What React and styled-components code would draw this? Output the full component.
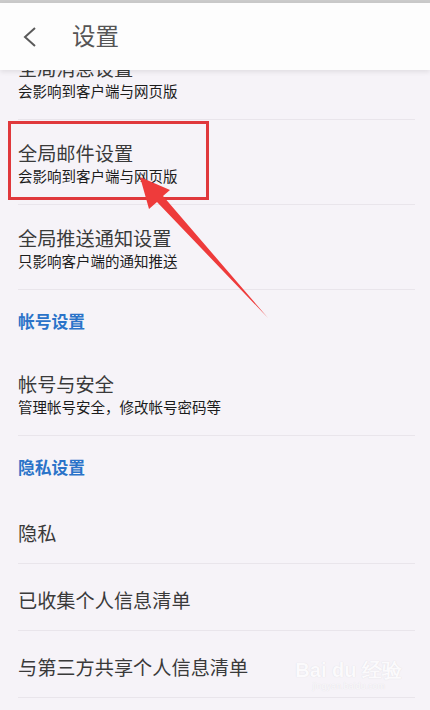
import React from 'react'
import styled, { createGlobalStyle } from 'styled-components'

const GlobalStyle = createGlobalStyle`
  html, body {
    margin: 0;
    padding: 0;
    background: #f6f3f8;
  }
  body {
    font-family: "Noto Sans CJK SC", "Noto Sans", sans-serif;
  }
`

const Screen = styled.div`
  position: relative;
  width: 430px;
  height: 710px;
  overflow: hidden;
  display: flex;
  flex-direction: column;
  background: #f6f3f8;
`

const StatusStrip = styled.div`
  height: 3px;
  background: #cbcbcb;
  flex-shrink: 0;
`

const Header = styled.header`
  position: relative;
  z-index: 2;
  height: 67px;
  flex-shrink: 0;
  display: flex;
  align-items: center;
  background: #fdfdfd;
  box-shadow: 0 2px 5px rgba(0, 0, 0, 0.09);
`

const BackButton = styled.button`
  width: 72px;
  height: 67px;
  border: 0;
  padding: 0 0 0 22px;
  background: none;
  display: flex;
  align-items: center;
`

const Title = styled.h1`
  margin: 0 0 3px;
  font-size: 23.5px;
  font-weight: 400;
  color: #555;
  letter-spacing: 0;
`

const Scroller = styled.div`
  flex: 1;
  overflow: hidden;
`

const List = styled.div`
  margin-top: -35px;
`

const Row = styled.div`
  position: relative;
  margin: 0 15px 0 18px;
  padding: ${p => (p.$single ? '23px 0 17px' : '20px 0 18px')};
  border-bottom: 1px solid #e9e5eb;
`

const RowTitle = styled.div`
  font-size: 19.2px;
  line-height: 26px;
  color: #3a3a3a;
`

const RowSub = styled.div`
  font-size: 14.5px;
  line-height: 20px;
  color: #1c1c1c;
`

const Section = styled.div`
  height: 61px;
  display: flex;
  align-items: center;
  padding-left: 18px;
  font-size: 16.8px;
  font-weight: 700;
  color: #2b73c9;
`

const Highlight = styled.div`
  position: absolute;
  left: -10px;
  top: -84px;
  width: 195px;
  height: 73px;
  border: 3px solid #e0383c;
`

const Arrow = styled.svg`
  position: absolute;
  left: 0;
  top: 0;
  pointer-events: none;
  z-index: 1;
`

const Watermark = styled.div`
  position: absolute;
  right: 28px;
  bottom: 18px;
  display: flex;
  flex-direction: column;
  align-items: center;
  color: #fbfafc;
  text-shadow: 0 0 1px #d9d6dc;
  pointer-events: none;
`

const MarkLogo = styled.div`
  font-family: "Liberation Sans", sans-serif;
  font-size: 20px;
  font-weight: 700;
  line-height: 22px;
`

const MarkUrl = styled.div`
  font-family: "Liberation Sans", sans-serif;
  font-size: 9px;
  line-height: 11px;
`

const items = [
  { title: '全局消息设置', sub: '会影响到客户端与网页版' },
  { title: '全局邮件设置', sub: '会影响到客户端与网页版' },
  { title: '全局推送通知设置', sub: '只影响客户端的通知推送', mark: true },
]

export default function App() {
  return (
    <>
      <GlobalStyle />
      <Screen>
        <StatusStrip />
        <Header>
          <BackButton aria-label="返回">
            <svg width="16" height="22" viewBox="0 0 16 22">
              <path d="M13 2 L3 11 L13 20" fill="none" stroke="#5a5a5a" strokeWidth="2" strokeLinejoin="miter" />
            </svg>
          </BackButton>
          <Title>设置</Title>
        </Header>
        <Scroller>
          <List>
            {items.map(it => (
              <Row key={it.title}>
                <RowTitle>{it.title}</RowTitle>
                <RowSub>{it.sub}</RowSub>
                {it.mark && <Highlight />}
              </Row>
            ))}
            <Section>帐号设置</Section>
            <Row>
              <RowTitle>帐号与安全</RowTitle>
              <RowSub>管理帐号安全，修改帐号密码等</RowSub>
            </Row>
            <Section>隐私设置</Section>
            <Row $single>
              <RowTitle>隐私</RowTitle>
            </Row>
            <Row $single>
              <RowTitle>已收集个人信息清单</RowTitle>
            </Row>
            <Row $single>
              <RowTitle>与第三方共享个人信息清单</RowTitle>
            </Row>
          </List>
        </Scroller>
        <Arrow width="430" height="710" viewBox="0 0 430 710">
          <polygon
            points="140,177 170,190 163,196 268,318 157,202 149,209"
            fill="#ee3b3b"
          />
        </Arrow>
        <Watermark>
          <MarkLogo>Bai du 经验</MarkLogo>
          <MarkUrl>jingyan.baidu.com</MarkUrl>
        </Watermark>
      </Screen>
    </>
  )
}
